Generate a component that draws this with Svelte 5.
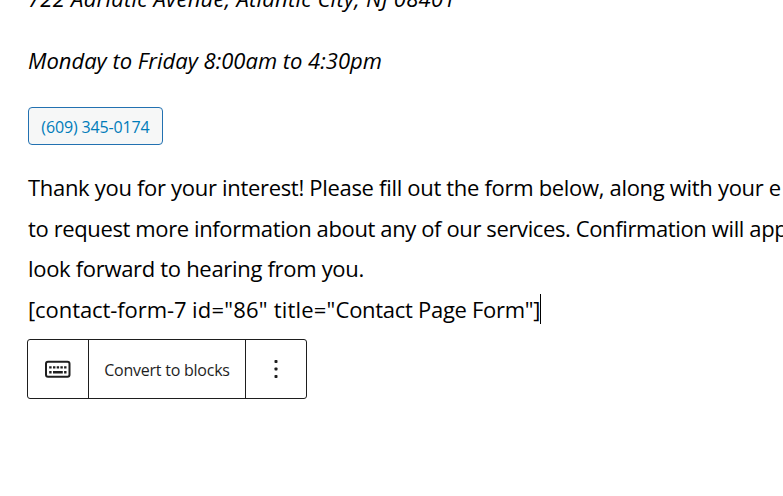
<script lang="ts">
  const address = '722 Adriatic Avenue, Atlantic City, NJ 08401'
  const hours = 'Monday to Friday 8:00am to 4:30pm'
  const phone = '(609) 345-0174'
</script>

<main class="editor">
  <div class="line em address">{address}</div>
  <div class="line em hours">{hours}</div>
  <button class="phone">{phone}</button>
  <div class="copy">
    <div class="line">Thank you for your interest! Please fill out the form below, along with your e</div>
    <div class="line tight">to request more information about any of our services. Confirmation will app</div>
    <div class="line">look forward to hearing from you.</div>
    <div class="line shortcode">[contact-form-7 <span class="attr">id="86" title="</span><span class="value">Contact Page Form"]</span><i class="caret"></i></div>
  </div>
  <div class="toolbar">
    <button class="icon" aria-label="Classic">
      <svg width="28" height="20" viewBox="0 0 28 20">
        <rect x="2" y="2.7" width="23.5" height="15.1" rx="2" fill="none" stroke="#1e1e1e" stroke-width="2" />
        <path
          d="M5.2 7.2h2.4v2.4h-2.4z M9 7.2h2.4v2.4h-2.4z M12.7 7.2h2.4v2.4h-2.4z M16.4 7.2h2.4v2.4h-2.4z M20.1 7.2h2.4v2.4h-2.4z M5.2 12.1h2.4v2.4h-2.4z M9 12.1h9.8v2.4h-9.8z M20.1 12.1h2.4v2.4h-2.4z"
          fill="#1e1e1e"
        />
      </svg>
    </button>
    <button class="convert">Convert to blocks</button>
    <button class="more" aria-label="Options">
      <svg width="6" height="22" viewBox="0 0 6 22" fill="#1e1e1e">
        <rect x="1.5" y="2" width="3" height="3" rx="0.8" />
        <rect x="1.5" y="9.5" width="3" height="3" rx="0.8" />
        <rect x="1.5" y="17" width="3" height="3" rx="0.8" />
      </svg>
    </button>
  </div>
</main>

<style>
  :global(body) {
    background: #fff;
    overflow: hidden;
  }
  .editor {
    height: 496px;
    box-sizing: border-box;
    overflow: hidden;
    padding-left: 28px;
    font-family: 'Open Sans', 'Noto Sans', sans-serif;
    font-size: 22px;
    color: #000;
  }
  .line {
    height: 41px;
    line-height: 41px;
    white-space: nowrap;
  }
  .em {
    font-style: italic;
  }
  .address {
    margin-top: -22px;
    letter-spacing: 0.25px;
  }
  .hours {
    margin-top: 21px;
  }
  button {
    font-family: inherit;
    margin: 0;
    padding: 0;
    box-sizing: border-box;
  }
  .phone {
    display: block;
    width: 135px;
    height: 38px;
    margin-top: 26px;
    padding-top: 1px;
    border: 1px solid #2271b1;
    border-radius: 4px;
    background: #f6f7f7;
    color: #007cba;
    font-size: 16px;
    letter-spacing: -0.14px;
  }
  .copy {
    display: grid;
    grid-template-rows: 41px 40px 41px 41px;
    margin-top: 22px;
    letter-spacing: -0.31px;
  }
  .tight {
    letter-spacing: -0.38px;
  }
  .shortcode {
    display: flex;
    white-space: pre;
    letter-spacing: -0.08px;
  }
  .attr {
    letter-spacing: 0.2px;
  }
  .value {
    letter-spacing: -0.29px;
  }
  .caret {
    width: 1px;
    height: 30px;
    margin-top: 5px;
    background: #000;
  }
  .toolbar {
    display: flex;
    width: 280px;
    height: 60px;
    margin: 9px 0 0 -1px;
    box-sizing: border-box;
    border: 1px solid #1e1e1e;
    border-radius: 3px;
  }
  .toolbar button {
    display: flex;
    align-items: center;
    justify-content: center;
    border: 0;
    background: none;
    color: #1e1e1e;
    font-size: 16px;
  }
  .toolbar .icon {
    width: 61px;
    border-right: 1px solid #1e1e1e;
  }
  .toolbar .convert {
    width: 157px;
    border-right: 1px solid #1e1e1e;
    letter-spacing: -0.24px;
    padding-top: 2px;
  }
  .toolbar .more {
    flex: 1;
  }
</style>
